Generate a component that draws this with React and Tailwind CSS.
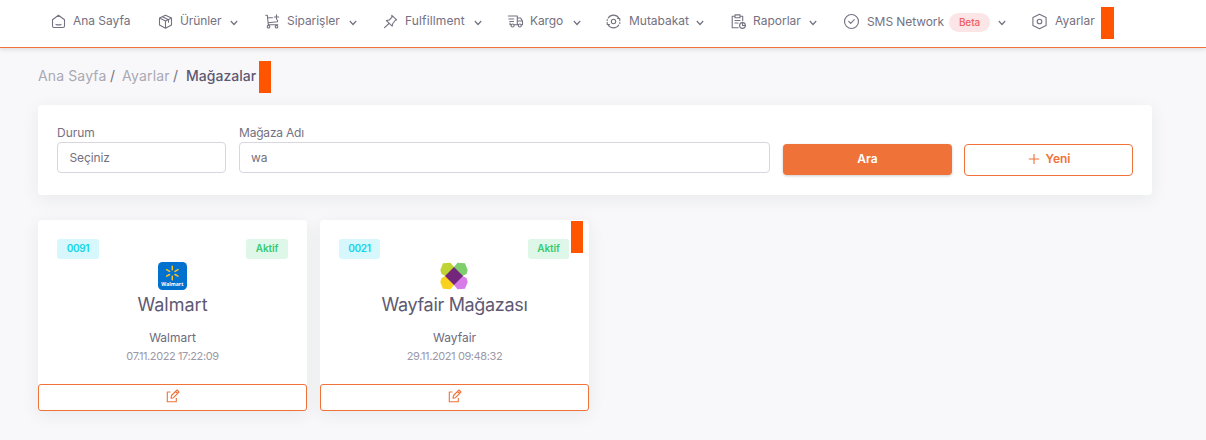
import React from "react";

const paths = {
  home: <path d="M1.500 5.800 7.500 1.200 13.500 5.800V12q0 1.500-1.500 1.500H3Q1.500 13.500 1.500 12ZM5 10.400q2.500 1 5 0" />,
  box: <path d="m7.500 1.200 6 2.800v7l-6 3.200-6-3.200V4Zm-6 2.900 6 3 6-3M7.500 7.100v7M4.500 2.700l6 3v2.500" />,
  cart: <><path d="M.7 1.300h1.600l1 9.400h9.500M3 3.700h4.500M3.200 8.800l9.300-1V6M11.500.8v4.400M9.300 3h4.400" /><circle cx="3.500" cy="12.700" r="1.300" /><circle cx="11.500" cy="12.700" r="1.300" /></>,
  pin: <path d="m8.800 1.300 4.900 4.500-1.500.7-2.400 3-.6 2.600-5.800-5.500 2.800-.6 2.700-2.700ZM6 9.500l-4.500 4.200" />,
  truck: <><path d="M.3 2h9v8.800H6.200M9.300 4h3.200l2 3v3.800h-1.200M9.300 7h5M.8 5h5M1.800 7.500h3.700M2 9v1.800h1M10.500 10.800H9.300" /><circle cx="4.600" cy="11.500" r="1.500" /><circle cx="11.800" cy="11.500" r="1.500" /></>,
  cycle: <><circle cx="7.500" cy="7.500" r="2.200" /><path d="M2.200 4A6.300 6.300 0 0 1 12.800 4M12.800 11A6.300 6.300 0 0 1 2.200 11M1.200 6.500v-1M1.200 8.200v2.300h2.300M13.800 8.500v1M13.800 6.800V4.500h-2.300" /></>,
  report: <><path d="M4 2.300H1.200v11.400h6M9 2.300h2.700v4.500M4 .9h5v2.900H4ZM4 6.500h5M4 9h3" /><circle cx="11.500" cy="11.500" r="2.900" /><path d="M11.500 8.800v2.700h2.600" /></>,
  check: <><circle cx="7.500" cy="7.500" r="7" /><path d="m4.700 7.400 2 2 3.600-3.700" /></>,
  settings: <><path d="m7.500.2 6.600 3.400v7.800l-6.600 3.400-6.600-3.400V3.600Z" /><circle cx="7.500" cy="7.500" r="2.300" /></>,
};

function Icon({ name }) {
  return (
    <svg viewBox="0 0 15 15" className="size-[15px] shrink-0 overflow-visible" fill="none" stroke="currentColor" strokeWidth="1.1" strokeLinecap="round" strokeLinejoin="round">
      {paths[name]}
    </svg>
  );
}

function Chevron({ className }) {
  return (
    <svg viewBox="0 0 8 6" className={"mt-[3px] h-1.5 w-2 shrink-0 " + className} fill="none" stroke="currentColor" strokeWidth="1.2">
      <path d="m.8 1 3.200 3.500L7.200 1" />
    </svg>
  );
}

const nav = [
  { icon: "home", label: "Ana Sayfa", item: "w-[107px]", text: "ml-[7px] w-[58px] tracking-[-0.03px]" },
  { icon: "box", label: "Ürünler", item: "w-[107px]", text: "ml-[7px] w-[50px] tracking-[-0.1px]", menu: true },
  { icon: "cart", label: "Siparişler", item: "w-[118px]", text: "ml-[7px] w-[62px] tracking-[-0.05px]", menu: true },
  { icon: "pin", label: "Fulfillment", item: "w-[125px]", text: "ml-[7px] w-[69px] tracking-[0.14px]", menu: true },
  { icon: "truck", label: "Kargo", item: "w-[98px]", text: "ml-[7px] w-[43px] tracking-[-0.1px]", menu: true },
  { icon: "cycle", label: "Mutabakat", item: "w-[125px]", text: "ml-2 w-[67px] tracking-[-0.03px]", menu: true },
  { icon: "report", label: "Raporlar", item: "w-[113px]", text: "ml-[7px] w-[56px]", menu: true },
  { icon: "check", label: "SMS Network", item: "w-[188px]", text: "ml-2 w-[82px] tracking-[-0.08px] translate-y-px", menu: true, beta: true },
  { icon: "settings", label: "Ayarlar", item: "w-[61px]", text: "ml-2 w-[38px]" },
];

function WalmartLogo() {
  return (
    <svg viewBox="0 0 29 28" className="h-7 w-[29px]">
      <rect width="29" height="28" rx="4.500" fill="#0071ce" />
      <g stroke="#ffc220" strokeWidth="1.500" strokeLinecap="round">
        <path d="M14.300 4.200v3.500M14.300 14.200v3.500M8.600 7.700l3 1.700M17 12.500l3 1.700M20 7.700l-3 1.700M11.600 12.500l-3 1.700" />
      </g>
      <text x="14.300" y="23.900" textAnchor="middle" fill="white" fontSize="5.100" fontWeight="700" fontFamily="Open Sans, sans-serif">Walmart</text>
    </svg>
  );
}

function WayfairLogo() {
  return (
    <svg viewBox="0 0 28 28" className="size-7 -translate-x-px">
      <path d="m14 5-3.500-4.300L3 1.300.3 8l1.200 4L5.500 14 14 14Z" fill="#bfd335" />
      <path d="m14 5 3.500-4.300 7.500.6L27.700 8l-1.200 4-4 2H14Z" fill="#7fce6d" />
      <path d="m5.500 14-4 2-1.200 4L3 26.700l7.500.6L14 23v-9Z" fill="#f8d21c" />
      <path d="m22.500 14 4 2 1.200 4-2.700 6.700-7.500.6L14 23v-9Z" fill="#d67be8" />
      <path d="m14 5 9 9-9 9-9-9Z" fill="#74267c" />
    </svg>
  );
}

function StoreCard({ code, title, market, date, logo, titleClass, badgeClass, marked }) {
  return (
    <article className="relative flex h-[191px] w-[269px] flex-col rounded bg-white shadow-[0_4px_18px_rgba(34,41,47,0.07)]">
      <div className={"flex justify-between pt-[19px] pl-[19px] text-[10px] leading-[19px] font-semibold " + (marked ? "pr-5" : "pr-[19px]")}>
        <span className={"flex h-5 justify-center rounded-[3px] bg-[#d6f8fc] tracking-[-0.35px] text-[#14d4e7] " + badgeClass}>{code}</span>
        <span className={"flex h-5 justify-center rounded-[3px] bg-[#def7e8] tracking-[-0.1px] text-[#34cb73] " + badgeClass}>Aktif</span>
      </div>
      <div className="flex flex-col items-center pt-[3px]">
        {logo}
        <h2 className={"mt-[3px] text-[18px] leading-6 font-normal text-[#5e5873] " + titleClass}>{title}</h2>
        <p className="mt-3 text-xs leading-[18px] text-[#6e6b7b]">{market}</p>
        <time className="text-[11px] leading-[18px] tracking-[-0.4px] text-[#9b99a6]">{date}</time>
      </div>
      <button aria-label={title} className="mt-auto flex h-[27px] items-center justify-center rounded-[3px] border border-[#ef7238] pb-[3px] text-[#ef7238]">
        <svg viewBox="0 0 14 14" className="size-3.5" fill="none" stroke="currentColor" strokeWidth="1.100" strokeLinejoin="round">
          <path d="M4.500 3H1.300v9.800h9V9M5 9.200l.5-2.700L11 1l2 2-5.500 5.700ZM9.500 2.500l2 2" />
        </svg>
      </button>
      {marked && <span className="absolute top-px right-1.5 h-8 w-3 bg-[#ff5500]" />}
    </article>
  );
}

export default function App() {
  return (
    <div className="h-[440px] w-[1206px] overflow-hidden bg-[#f8f8fa] font-['Inter',sans-serif] text-xs text-[#747181]">
      <header className="flex h-12 items-start border-b border-[#ef7238] bg-white pl-[51px] shadow-[0_2px_4px_rgba(0,0,0,0.1)]">
        <nav className="flex h-[42px] items-center">
          {nav.map((n) => (
            <div key={n.label} className={"flex shrink-0 items-center " + n.item}>
              <Icon name={n.icon} />
              <span className={"whitespace-nowrap " + n.text}>{n.label}</span>
              {n.beta && <span className="mt-[3px] flex h-[19px] w-[41px] items-center justify-center rounded-full bg-[#fce5e6] text-[10px] font-medium tracking-[-0.1px] text-[#ef5d60]">Beta</span>}
              {n.menu && <Chevron className={n.beta ? "ml-2" : ""} />}
            </div>
          ))}
        </nav>
        <span className="mt-[7px] ml-2 h-8 w-[13px] bg-[#ff5500]" />
      </header>
      <main className="pl-[38px]">
        <div className="flex h-[57px] items-center pb-px text-sm">
          <span className="w-[72px] tracking-[0.13px] whitespace-nowrap text-[#aaa8b3]">Ana Sayfa</span><span className="w-3">/</span>
          <span className="w-[51px] tracking-[0.2px] whitespace-nowrap text-[#aaa8b3]">Ayarlar</span><span className="w-[13px]">/</span>
          <span className="w-[73px] font-medium tracking-[0.03px] text-[#5e5873]">Mağazalar</span>
          <span className="mt-px h-8 w-3 bg-[#ff5500]" />
        </div>
        <section className="flex h-[90px] w-[1114px] items-start rounded bg-white pl-[19px] shadow-[0_4px_18px_rgba(34,41,47,0.07)]">
          <div className="mr-[13px] w-[169px] pt-5">
            <label className="block h-[17px] leading-4">Durum</label>
            <div className="flex h-[31px] items-center rounded border border-[#d8d6de] pl-[11.5px] tracking-[-0.1px]">Seçiniz</div>
          </div>
          <div className="mr-[13px] w-[531px] pt-5">
            <label className="block h-[17px] leading-4 tracking-[-0.2px]">Mağaza Adı</label>
            <div className="flex h-[31px] items-center rounded border border-[#d8d6de] pl-[11px]">wa</div>
          </div>
          <button className="mt-[39px] mr-3 h-[31px] w-[169px] rounded bg-[#ef7238] pb-px font-semibold text-white shadow-[0_1px_3px_rgba(0,0,0,0.2)]">Ara</button>
          <button className="mt-[39px] flex h-8 w-[169px] items-center justify-center gap-1.5 rounded border border-[#ef7238] pb-0.5 pl-px font-semibold text-[#ef7238]">
            <svg viewBox="0 0 12 12" className="size-3" stroke="currentColor" strokeWidth="1.1"><path d="M6 1v10M.800 6h10.400" /></svg>
            Yeni
          </button>
        </section>
        <div className="mt-[25px] flex gap-[13px]">
          <StoreCard code="0091" title="Walmart" market="Walmart" date="07.11.2022 17:22:09" titleClass="" badgeClass="w-[42px]" logo={<WalmartLogo />} />
          <StoreCard code="0021" title="Wayfair Mağazası" market="Wayfair" date="29.11.2021 09:48:32" titleClass="tracking-[-0.32px]" badgeClass="w-[41px]" logo={<WayfairLogo />} marked />
        </div>
      </main>
    </div>
  );
}
